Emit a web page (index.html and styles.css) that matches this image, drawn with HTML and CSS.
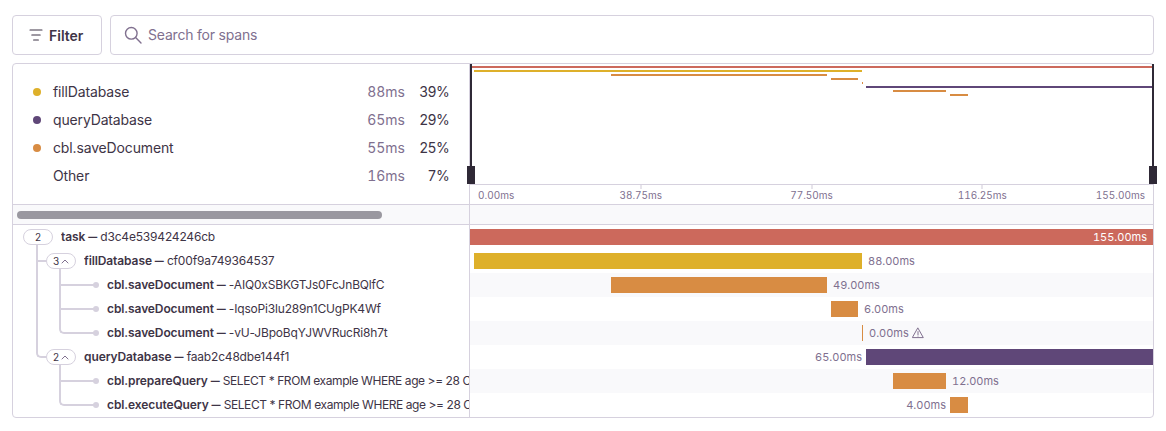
FILE: index.html
```html
<!DOCTYPE html>
<html lang="en">
<head>
  <meta charset="UTF-8">
  <title>Trace spans</title>
  <link rel="stylesheet" href="styles.css">
</head>
<body>
  <div class="toolbar">
    <button class="filter-btn" type="button">
      <svg width="14" height="14" viewBox="0 0 14 14" fill="none" stroke="#3e3446" stroke-width="1.1" stroke-linecap="round"><path d="M1 2h12M2.8 7h8.4M4.6 12h4.8"/></svg>
      Filter
    </button>
    <div class="search">
      <svg width="18" height="18" viewBox="0 0 18 18" fill="none" stroke="#80708f" stroke-width="1.4" stroke-linecap="round"><circle cx="7.3" cy="7.3" r="5.8"/><path d="M11.6 11.6l5.4 5.4"/></svg>
      <span class="search-text">Search for spans</span>
    </div>
  </div>

  <div class="panel">
    <div class="split">
      <div class="summary">
        <div class="op"><i class="dot yellow"></i><span class="op-name">fillDatabase</span><span class="op-time">88ms</span><span class="op-pct">39%</span></div>
        <div class="op"><i class="dot purple"></i><span class="op-name">queryDatabase</span><span class="op-time">65ms</span><span class="op-pct">29%</span></div>
        <div class="op"><i class="dot orange"></i><span class="op-name">cbl.saveDocument</span><span class="op-time">55ms</span><span class="op-pct">25%</span></div>
        <div class="op"><i class="dot"></i><span class="op-name">Other</span><span class="op-time">16ms</span><span class="op-pct">7%</span></div>
      </div>
      <div class="overview">
        <div class="minimap">
          <div class="mini red" style="margin-left:0;width:683px"></div>
          <div class="mini yellow" style="margin-left:4px;width:388px"></div>
          <div class="mini orange" style="margin-left:141px;width:216px"></div>
          <div class="mini orange" style="margin-left:361px;width:27px"></div>
          <div class="mini orange" style="margin-left:392px;width:1px"></div>
          <div class="mini purple" style="margin-left:396px;width:287px"></div>
          <div class="mini orange" style="margin-left:423px;width:53px"></div>
          <div class="mini orange" style="margin-left:480px;width:18px"></div>
          <div class="handle handle-l"></div>
          <div class="handle handle-r"></div>
        </div>
        <div class="axis">
          <span class="tick-label first">0.00ms</span>
          <span class="tick-label mid">38.75ms</span>
          <span class="tick-label mid">77.50ms</span>
          <span class="tick-label mid">116.25ms</span>
          <span class="tick-label last">155.00ms</span>
        </div>
      </div>
    </div>

    <div class="split scroll-row">
      <div class="scroll-cell"><div class="scroll-thumb"></div></div>
      <div></div>
    </div>

    <div class="split span-row">
      <div class="tree-cell depth-0">
        <span class="pill wide">2</span>
        <span class="span-text"><b>task <span class="dash">—</span></b> d3c4e539424246cb</span>
      </div>
      <div class="track">
        <div class="bar red" style="margin-left:0;width:683px"><span class="dur inside">155.00ms</span></div>
      </div>
    </div>

    <div class="split span-row">
      <div class="tree-cell depth-1">
        <i class="link" style="height:24px"></i>
        <span class="pill">3 <svg class="chev" width="8" height="5" viewBox="0 0 8 5" fill="none" stroke="#80708f" stroke-width="1" stroke-linecap="round"><path d="M1 4l3-3 3 3"/></svg></span>
        <span class="span-text"><b>fillDatabase <span class="dash">—</span></b> cf00f9a749364537</span>
      </div>
      <div class="track">
        <div class="bar yellow" style="margin-left:4px;width:388px"><span class="dur after">88.00ms</span></div>
      </div>
    </div>

    <div class="split span-row">
      <div class="tree-cell depth-2">
        <i class="link" style="height:24px"></i>
        <i class="bullet"></i>
        <span class="span-text"><b>cbl.saveDocument <span class="dash">—</span></b> -AIQ0xSBKGTJs0FcJnBQlfC</span>
      </div>
      <div class="track">
        <div class="bar orange" style="margin-left:141px;width:216px"><span class="dur after">49.00ms</span></div>
      </div>
    </div>

    <div class="split span-row">
      <div class="tree-cell depth-2">
        <i class="link" style="height:24px"></i>
        <i class="bullet"></i>
        <span class="span-text"><b>cbl.saveDocument <span class="dash">—</span></b> -IqsoPi3lu289n1CUgPK4Wf</span>
      </div>
      <div class="track">
        <div class="bar orange" style="margin-left:361px;width:27px"><span class="dur after">6.00ms</span></div>
      </div>
    </div>

    <div class="split span-row">
      <div class="tree-cell depth-2">
        <i class="link last" style="height:24px"></i>
        <i class="bullet"></i>
        <span class="span-text"><b>cbl.saveDocument <span class="dash">—</span></b> -vU-JBpoBqYJWVRucRi8h7t</span>
      </div>
      <div class="track">
        <div class="bar orange" style="margin-left:392px;width:1px">
          <span class="dur after warn">0.00ms
            <svg width="12" height="12" viewBox="0 0 12 12" fill="none" stroke="#80708f" stroke-width="1" stroke-linejoin="round" stroke-linecap="round"><path d="M6 1.2L11.3 10.6H.7z"/><path d="M6 4.6v3M6 9v.1"/></svg>
          </span>
        </div>
      </div>
    </div>

    <div class="split span-row">
      <div class="tree-cell depth-1">
        <i class="link last" style="height:96px"></i>
        <span class="pill">2 <svg class="chev" width="8" height="5" viewBox="0 0 8 5" fill="none" stroke="#80708f" stroke-width="1" stroke-linecap="round"><path d="M1 4l3-3 3 3"/></svg></span>
        <span class="span-text"><b>queryDatabase <span class="dash">—</span></b> faab2c48dbe144f1</span>
      </div>
      <div class="track">
        <div class="bar purple" style="margin-left:396px;width:287px"><span class="dur before">65.00ms</span></div>
      </div>
    </div>

    <div class="split span-row">
      <div class="tree-cell depth-2">
        <i class="link" style="height:24px"></i>
        <i class="bullet"></i>
        <span class="span-text"><b>cbl.prepareQuery <span class="dash">—</span></b> <span class="sql">SELECT * FROM example WHERE age &gt;= 28 ORDER BY name</span></span>
      </div>
      <div class="track">
        <div class="bar orange" style="margin-left:423px;width:53px"><span class="dur after">12.00ms</span></div>
      </div>
    </div>

    <div class="split span-row">
      <div class="tree-cell depth-2">
        <i class="link last" style="height:24px"></i>
        <i class="bullet"></i>
        <span class="span-text"><b>cbl.executeQuery <span class="dash">—</span></b> <span class="sql">SELECT * FROM example WHERE age &gt;= 28 ORDER BY name</span></span>
      </div>
      <div class="track">
        <div class="bar orange" style="margin-left:480px;width:18px"><span class="dur before">4.00ms</span></div>
      </div>
    </div>
  </div>
</body>
</html>
```
FILE: styles.css
```css
* {
  box-sizing: border-box;
}

body {
  margin: 0;
  padding: 15px 12px 0;
  background-color: #ffffff;
  color: #3e3446;
  font-family: Inter, 'Liberation Sans', sans-serif;
}

.toolbar {
  display: flex;
  gap: 8px;
  margin-bottom: 8px;
}

.filter-btn {
  display: flex;
  align-items: center;
  gap: 6px;
  width: 90px;
  height: 40px;
  padding: 0 0 0 16px;
  background-color: #ffffff;
  color: #3e3446;
  border: 1px solid #d6d1de;
  border-radius: 4px;
  font-family: inherit;
  font-size: 14px;
  font-weight: 600;
}

.search {
  flex: 1;
  display: flex;
  align-items: center;
  gap: 6px;
  height: 40px;
  padding-left: 13px;
  border: 1px solid #d6d1de;
  border-radius: 4px;
  color: #80708f;
  font-size: 14px;
}

.search-text {
  padding-bottom: 2px;
  letter-spacing: -0.2px;
}

.panel {
  border: 1px solid #d6d1de;
  border-radius: 4px;
  width: 1142px;
}

.split {
  display: grid;
  grid-template-columns: 457px 683px;
}

.summary {
  height: 141px;
  padding: 14px 20px 0 20px;
  border-right: 1px solid #d6d1de;
  border-bottom: 1px solid #d6d1de;
}

.op {
  display: flex;
  align-items: center;
  height: 28px;
  font-size: 14px;
}

.op span {
  padding-bottom: 2px;
}

.dot {
  width: 8px;
  height: 8px;
  margin-right: 12px;
  border-radius: 50%;
}

.op-name {
  flex: 1;
  letter-spacing: -0.15px;
}

.op-time {
  color: #80708f;
  font-variant-numeric: tabular-nums;
}

.op-pct {
  width: 44px;
  text-align: right;
  letter-spacing: -0.7px;
  font-variant-numeric: tabular-nums;
}

.yellow { background-color: #deb02a; }
.purple { background-color: #5f4778; }
.orange { background-color: #d88c43; }
.red { background-color: #cc695c; }

.overview {
  border-bottom: 1px solid #d6d1de;
}

.minimap {
  position: relative;
  height: 120px;
  padding-top: 2px;
  display: flex;
  flex-direction: column;
  gap: 2px;
}

.mini {
  height: 2px;
}

.handle {
  position: absolute;
  top: 0;
  bottom: 0;
  width: 2px;
  background-color: #2f2936;
}

.handle::after {
  content: "";
  position: absolute;
  bottom: 0;
  left: -3px;
  width: 8px;
  height: 18px;
  background-color: #2f2936;
}

.handle-l {
  left: 0;
}

.handle-r {
  right: -1px;
}

.axis {
  display: grid;
  grid-template-columns: 1fr 2fr 2fr 2fr 1fr;
  height: 20px;
  border-top: 1px solid #d6d1de;
  color: #80708f;
  font-size: 10px;
  line-height: 20px;
  font-variant-numeric: tabular-nums;
}

.tick-label {
  position: relative;
  white-space: nowrap;
}

.tick-label.first {
  padding-left: 8px;
}

.tick-label.last {
  padding-right: 8px;
  text-align: right;
}

.tick-label.mid {
  text-align: center;
}

.tick-label.mid::before {
  content: "";
  position: absolute;
  top: 0;
  left: 50%;
  width: 2px;
  height: 4px;
  margin-left: -1px;
  background-color: #e7e4eb;
}

.scroll-row {
  height: 20px;
  background-color: #f9f9fb;
  border-bottom: 1px solid #d6d1de;
}

.scroll-cell {
  padding: 6px 0 0 4px;
  border-right: 1px solid #d6d1de;
}

.scroll-thumb {
  width: 365px;
  height: 8px;
  border-radius: 4px;
  background-color: #9a98a0;
}

.span-row {
  height: 24px;
}

.tree-cell {
  position: relative;
  display: flex;
  align-items: center;
  border-right: 1px solid #d6d1de;
  font-size: 12px;
  white-space: nowrap;
}

.depth-0 { padding-left: 10px; }
.depth-1 { padding-left: 33px; }
.depth-2 { padding-left: 78px; }

.span-text {
  flex: 1;
  min-width: 0;
  overflow: hidden;
  padding-bottom: 2px;
  letter-spacing: -0.18px;
}

.span-text b {
  font-weight: 600;
  letter-spacing: -0.1px;
}

.dash {
  font-size: 9px;
  font-weight: 800;
  vertical-align: 1px;
}

.sql {
  letter-spacing: -0.42px;
}

.pill {
  position: relative;
  z-index: 1;
  display: flex;
  align-items: center;
  justify-content: center;
  gap: 2px;
  flex: none;
  width: 30px;
  height: 16px;
  margin-right: 8px;
  background-color: #ffffff;
  border: 1px solid #d6d1de;
  border-radius: 8px;
  font-size: 10px;
}

.link {
  position: absolute;
  bottom: 11px;
  border-left: 2px solid #d6d1de;
  border-bottom: 2px solid #d6d1de;
}

.depth-1 .link {
  left: 23px;
  width: 11px;
}

.depth-2 .link {
  left: 46px;
  width: 36px;
}

.link.last {
  border-bottom-left-radius: 5px;
}

.bullet {
  position: relative;
  flex: none;
  width: 6px;
  height: 6px;
  margin-right: 8px;
  margin-left: 2px;
  border-radius: 50%;
  background-color: #d6d1de;
}

.track {
  padding-top: 4px;
}

.span-row:nth-child(n+5):nth-child(odd) .track {
  background-color: #f9f9fb;
}

.bar {
  position: relative;
  height: 16px;
}

.dur {
  position: absolute;
  top: 0;
  color: #80708f;
  font-size: 11px;
  line-height: 16px;
  white-space: nowrap;
  font-variant-numeric: tabular-nums;
}

.dur.after {
  left: calc(100% + 6px);
}

.dur.before {
  right: calc(100% + 4px);
}

.dur.inside {
  right: 6px;
  color: #ffffff;
}

.warn {
  display: flex;
  align-items: center;
  gap: 3px;
}
```
